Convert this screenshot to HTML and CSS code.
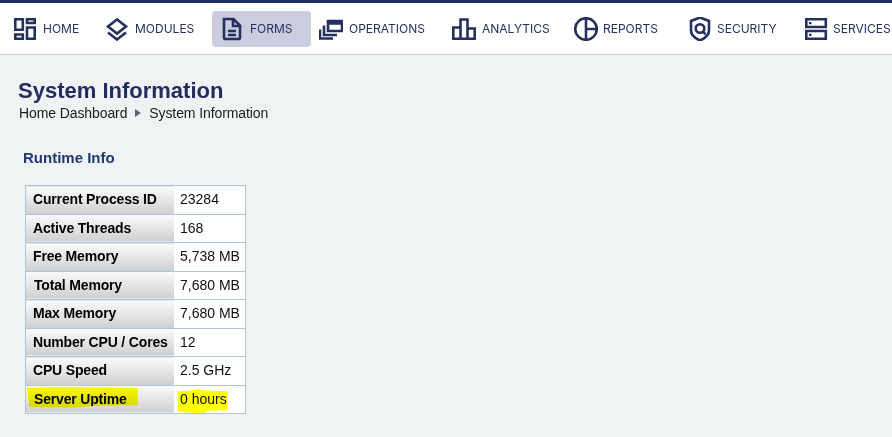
FILE: index.html
```html
<!DOCTYPE html>
<html lang="en">
<head>
<meta charset="utf-8">
<title>System Information</title>
<link rel="stylesheet" href="styles.css">
</head>
<body>
<header class="topbar">
  <nav class="nav">
    <a class="nav-item item-home">
      <svg class="icon" viewBox="0 0 24 24"><path d="M2.300 2.300h7.500v10.500H2.300zM14 2.300h7.700v3.700H14zM2.300 17.500h7.500v4.200H2.300zM14 10.500h7.700v11.200H14z"/></svg>
      <span>HOME</span>
    </a>
    <a class="nav-item item-modules">
      <svg class="icon" viewBox="0 0 24 24"><path d="M12 2.500 3 9.500l9 7 9-7zM3 15.500l9 7 9-7"/></svg>
      <span>MODULES</span>
    </a>
    <a class="nav-item item-forms active">
      <svg class="icon" viewBox="0 0 24 24"><path d="M4 2h9.500L20 8.500V21a1 1 0 0 1-1 1H5a1 1 0 0 1-1-1zM13 2v7h7M8 14h8M8 18h8"/></svg>
      <span>FORMS</span>
    </a>
    <a class="nav-item item-operations">
      <svg class="icon" viewBox="0 0 24 24"><path d="M9 4h14v10H9zM9 6.500h14M5 8.500V18h13M1 12.500V21.500h13"/></svg>
      <span>OPERATIONS</span>
    </a>
    <a class="nav-item item-analytics">
      <svg class="icon" viewBox="0 0 24 24"><path d="M1.300 10.500h7.200v11.200H1.300zM8.500 2.500h7v19.200h-7zM15.500 11.500h7.200v10.200h-7.200z"/></svg>
      <span>ANALYTICS</span>
    </a>
    <a class="nav-item item-reports">
      <svg class="icon" viewBox="0 0 24 24"><circle cx="12" cy="12" r="10.800"/><path d="M12 1v22M12 12h11"/></svg>
      <span>REPORTS</span>
    </a>
    <a class="nav-item item-security">
      <svg class="icon" viewBox="0 0 24 24"><path d="M12 0.500 21 4v9.500c0 4.500-4 7.800-9 10-5-2.200-9-5.500-9-10V4z"/><circle cx="12" cy="11.500" r="4.300"/><path d="M15 14.500l2.500 3"/></svg>
      <span>SECURITY</span>
    </a>
    <a class="nav-item item-services">
      <svg class="icon" viewBox="0 0 24 24"><path d="M2.300 2.300h19.500v7.700H2.300zM2.300 14h19.500v7.700H2.300z"/><path class="dots" d="M5 5h2.500v2.200H5zM5 16.800h2.500V19H5z"/></svg>
      <span>SERVICES</span>
    </a>
  </nav>
</header>
<main class="content">
  <h1 class="title">System Information</h1>
  <div class="crumbs">
    <span>Home Dashboard</span>
    <i class="crumb-arrow"></i>
    <span>System Information</span>
  </div>
  <h2 class="section">Runtime Info</h2>
  <table class="info">
    <tr><th>Current Process ID</th><td>23284</td></tr>
    <tr><th>Active Threads</th><td>168</td></tr>
    <tr><th>Free Memory</th><td>5,738 MB</td></tr>
    <tr><th class="nudge">Total Memory</th><td>7,680 MB</td></tr>
    <tr><th>Max Memory</th><td>7,680 MB</td></tr>
    <tr><th>Number CPU / Cores</th><td>12</td></tr>
    <tr><th>CPU Speed</th><td>2.5 GHz</td></tr>
    <tr><th class="nudge"><mark class="hl hl-label">Server Uptime</mark></th><td><mark class="hl hl-value">0 hours</mark></td></tr>
  </table>
</main>
</body>
</html>
```
FILE: styles.css
```css
* { box-sizing: border-box; }
html, body { margin: 0; height: 100%; }
body {
  background: #f0f3f4;
  font-family: "Liberation Sans", Arial, sans-serif;
  color: #111;
  overflow: hidden;
}
.topbar {
  height: 55px;
  background: #fff;
  border-top: 3px solid #1f2a5e;
  border-bottom: 1px solid #c9cee2;
}
.nav {
  display: flex;
  align-items: flex-start;
  white-space: nowrap;
}
.nav-item {
  display: flex;
  align-items: center;
  height: 36px;
  margin-top: 8px;
  flex: none;
  font-family: Inter, sans-serif;
  font-size: 12px;
  color: #25305f;
  border-radius: 4px;
}
.nav-item span { padding-bottom: 2px; }
.icon {
  width: 24px;
  height: 24px;
  flex: none;
  fill: none;
  stroke: #25305f;
  stroke-width: 2.600;
}
.dots { fill: #25305f; stroke: none; }
.item-home { margin-left: 13px; gap: 6px; width: 92px; }
.item-modules { gap: 6px; width: 107px; }
.item-forms { width: 99px; padding-left: 8px; gap: 6px; background: #cbcddf; }
.item-operations { margin-left: 8px; gap: 6px; width: 133px; }
.item-analytics { gap: 6px; width: 122px; }
.item-reports { gap: 5px; width: 114px; }
.item-security { gap: 5px; width: 116px; }
.item-services { gap: 5px; }
.content { padding: 22px 18px 0; }
.title {
  margin: 0;
  font-size: 22px;
  line-height: 28px;
  font-weight: 700;
  color: #242b5e;
}
.crumbs {
  display: flex;
  align-items: center;
  gap: 8px;
  margin: 0 0 0 1px;
  font-size: 14px;
  line-height: 16px;
  letter-spacing: -0.100px;
  color: #1b1b1b;
}
.crumb-arrow {
  width: 0;
  height: 0;
  border-left: 6px solid #5a6478;
  border-top: 4px solid transparent;
  border-bottom: 4px solid transparent;
}
.section {
  margin: 29px 0 0 5px;
  font-size: 15px;
  line-height: 16px;
  font-weight: 700;
  color: #1f3a73;
}
.info {
  margin: 19px 0 0 7px;
  width: 221px;
  height: 229px;
  border-collapse: collapse;
  border: 1px solid #b4c3d8;
  font-size: 14px;
  background: #fff;
}
.info tr { height: 28.500px; }
.info th, .info td {
  padding: 0 0 1px;
  border-bottom: 1px solid #b4c3d8;
  white-space: nowrap;
}
.info th {
  width: 148px;
  padding-left: 7px;
  text-align: left;
  font-weight: 700;
  letter-spacing: -0.170px;
  color: #000;
  background: linear-gradient(#fbfbfb, #cfcfcf);
}
.info th.nudge { padding-left: 8px; }
.info td { padding-left: 6.500px; color: #111; }
.hl {
  color: inherit;
  background: #ff0;
  mix-blend-mode: multiply;
  display: inline-block;
}
.hl-label {
  margin: -4px -11px -1px -7px;
  padding: 4px 11px 1px 7px;
  clip-path: polygon(0 5%, 28% 0, 100% 5%, 100% 88%, 60% 92%, 38% 100%, 2% 95%);
}
.hl-value {
  margin: -2px -1px -6px -2px;
  padding: 2px 1px 6px 2px;
  clip-path: polygon(0 10%, 30% 6%, 38% 0, 50% 6%, 100% 10%, 100% 90%, 60% 92%, 55% 100%, 30% 100%, 0 96%);
}
```
